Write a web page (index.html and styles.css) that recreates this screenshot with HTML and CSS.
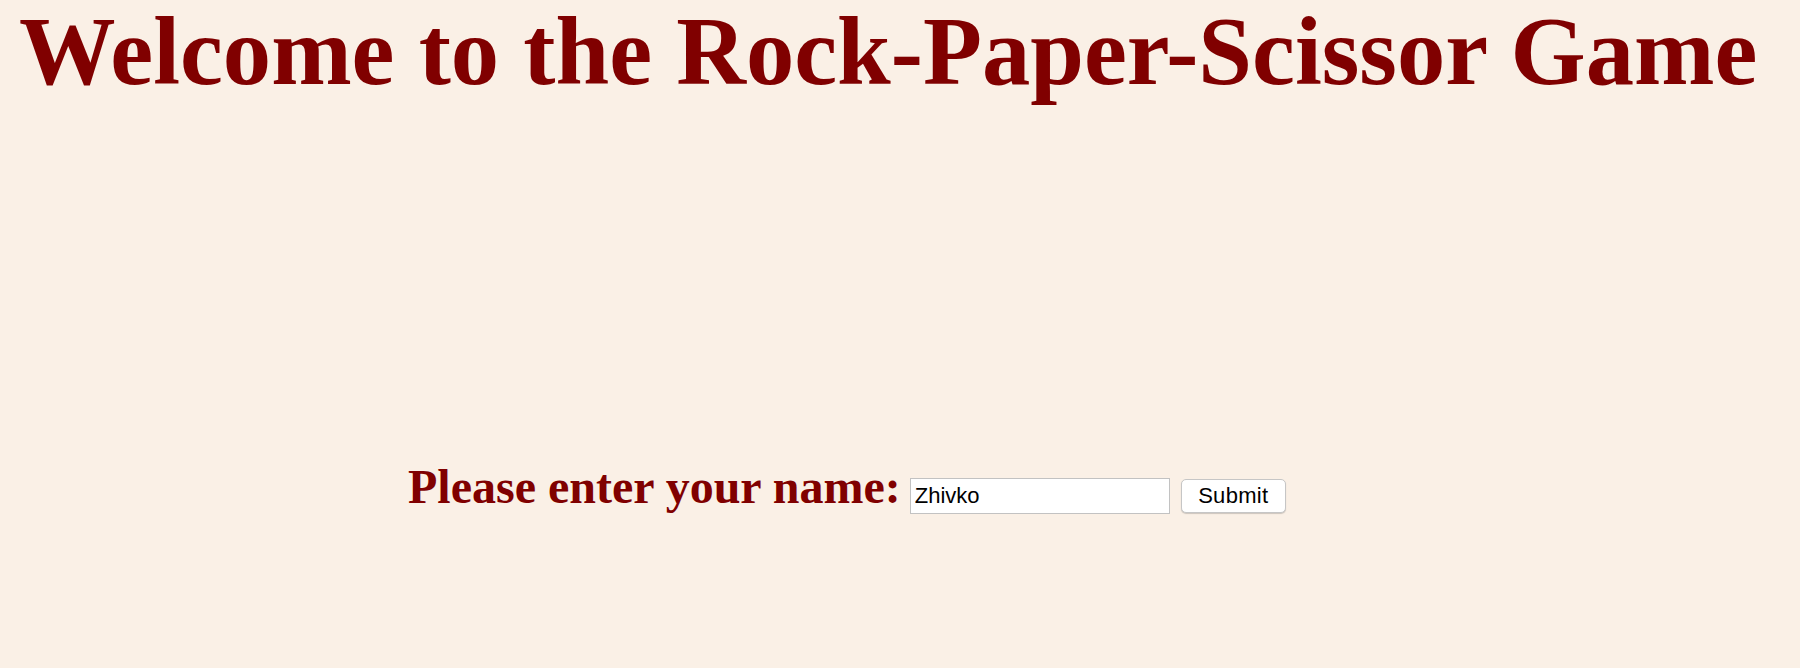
FILE: index.html
```html
<!DOCTYPE html>
<html>
<head>
<meta charset="utf-8">
<title>Rock-Paper-Scissor</title>
<link rel="stylesheet" href="styles.css">
</head>
<body>
<h1 class="title">Welcome to the Rock-Paper-Scissor Game</h1>
<form class="name-form">
  <label class="name-label" for="name">Please enter your name:</label>
  <input class="name-input" id="name" type="text" value="Zhivko">
  <button class="submit-btn" type="button">Submit</button>
</form>
</body>
</html>
```
FILE: styles.css
```css
html, body {
  margin: 0;
  padding: 0;
}
body {
  background: #faf0e6;
  width: 1800px;
  height: 668px;
  overflow: hidden;
  font-family: "Liberation Serif", "Times New Roman", serif;
  color: #800000;
}
.title {
  margin: 0;
  padding-left: 19px;
  font-size: 96.6px;
  font-weight: bold;
  line-height: 104px;
  white-space: nowrap;
}
.name-form {
  display: flex;
  align-items: baseline;
  margin-top: 356px;
  padding-left: 408px;
}
.name-label {
  font-size: 48px;
  font-weight: bold;
  line-height: 53px;
  margin-right: 9px;
}
.name-input {
  box-sizing: border-box;
  width: 260px;
  height: 36px;
  border: 1px solid #c2c2c2;
  padding: 0 4px;
  background: #fff;
  font-family: "Liberation Sans", Arial, sans-serif;
  font-size: 22px;
  color: #000;
  margin: 0 11px 0 0;
}
.submit-btn {
  box-sizing: border-box;
  width: 105px;
  height: 34px;
  border: 1px solid #c6c6c6;
  border-radius: 5px;
  background: #fff;
  box-shadow: 0 1px 1px rgba(0,0,0,0.18);
  font-family: "Liberation Sans", Arial, sans-serif;
  font-size: 22px;
  letter-spacing: 0.3px;
  color: #000;
  padding: 0;
}
```
